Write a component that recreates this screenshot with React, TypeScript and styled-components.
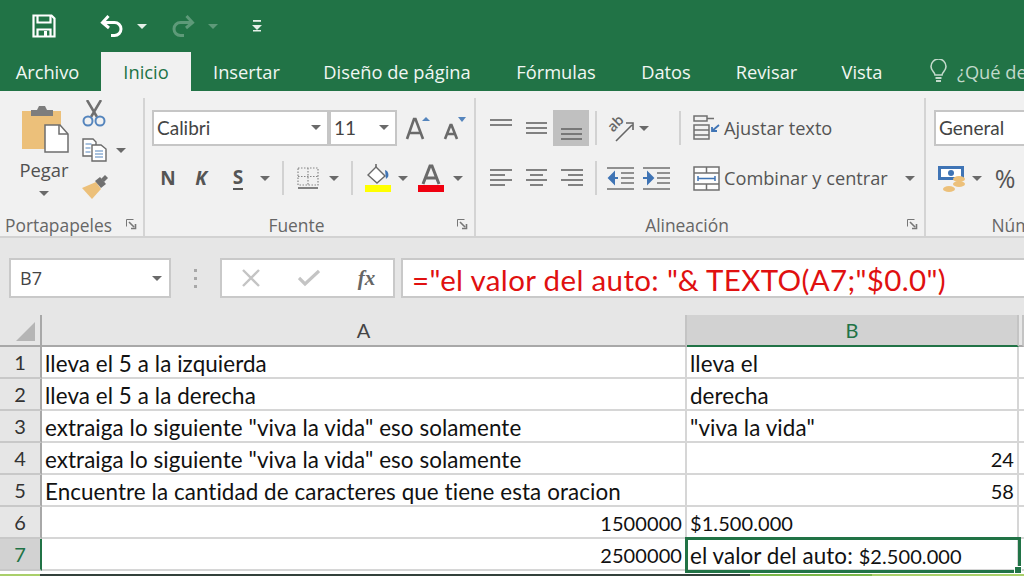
import React from "react";
import styled, { createGlobalStyle } from "styled-components";

const Global = createGlobalStyle`
  html, body { margin: 0; padding: 0; background: #fff; }
  body { width: 1024px; height: 576px; overflow: hidden; font-family: "Open Sans", "Liberation Sans", sans-serif; }
`;

const Page = styled.div`
  width: 1024px;
  height: 576px;
  display: flex;
  flex-direction: column;
  overflow: hidden;
`;

const TitleBar = styled.div`
  height: 52px;
  background: #217346;
  display: flex;
  align-items: center;
  flex: none;
`;

const QatSlot = styled.div<{ $w: number }>`
  width: ${(p) => p.$w}px;
  display: flex;
  justify-content: center;
  align-items: center;
  flex: none;
`;

const TabBar = styled.div`
  height: 39px;
  background: #217346;
  display: flex;
  align-items: stretch;
  flex: none;
`;

const Tab = styled.div<{ $w: number; $active?: boolean }>`
  width: ${(p) => p.$w}px;
  flex: none;
  display: flex;
  align-items: center;
  justify-content: center;
  font-size: 18.3px;
  box-sizing: border-box;
  color: ${(p) => (p.$active ? "#217346" : "#f1f7f3")};
  background: ${(p) => (p.$active ? "#f1f1f1" : "transparent")};
`;

const Hint = styled.div`
  margin-left: 27px;
  display: flex;
  align-items: center;
  gap: 10px;
  color: #c2d9cb;
  font-size: 18.3px;
  white-space: nowrap;
`;

const Ribbon = styled.div`
  height: 147px;
  flex: none;
  box-sizing: border-box;
  background: #f1f1f1;
  border-bottom: 2px solid #d2d2d2;
  display: flex;
  align-items: stretch;
  overflow: hidden;
`;

const Group = styled.div<{ $w: number; $last?: boolean }>`
  width: ${(p) => p.$w}px;
  flex: none;
  box-sizing: border-box;
  margin-top: 7px;
  display: flex;
  flex-direction: column;
  border-right: ${(p) => (p.$last ? "none" : "2px solid #d4d4d4")};
`;

const GroupBody = styled.div<{ $pad: number }>`
  flex: 1;
  display: flex;
  padding: 12px 0 0 ${(p) => p.$pad}px;
  min-height: 0;
`;

const GroupLabel = styled.div`
  height: 22px;
  flex: none;
  position: relative;
  display: flex;
  align-items: flex-start;
  justify-content: center;
  box-sizing: border-box;
  padding-right: 26px;
  font-size: 17.4px;
  line-height: 22px;
  color: #666;
  white-space: nowrap;
`;

const Launcher = styled.div`
  position: absolute;
  right: 6px;
  top: 5px;
  line-height: 0;
`;

const PasteColumn = styled.div`
  width: 66px;
  margin-top: -5px;
  display: flex;
  flex-direction: column;
  align-items: center;
  color: #555;
  & > svg:first-child {
    margin-left: 4px;
  }
`;

const PasteLabel = styled.div`
  font-size: 18.4px;
  line-height: 24px;
  margin-top: 5px;
  margin-bottom: 9px;
  color: #505050;
`;

const SmallColumn = styled.div`
  display: flex;
  flex-direction: column;
  gap: 5px;
  margin: -13px 0 0 5px;
`;

const SmallRow = styled.div`
  height: 32px;
  display: flex;
  align-items: center;
  gap: 9px;
`;

const Stack = styled.div`
  display: flex;
  flex-direction: column;
  gap: 14px;
`;

const ToolRow = styled.div`
  height: 36px;
  display: flex;
  align-items: center;
`;

const Slot = styled.div<{ $w: number; $selected?: boolean }>`
  width: ${(p) => p.$w}px;
  height: 36px;
  flex: none;
  display: flex;
  align-items: center;
  justify-content: center;
  background: ${(p) => (p.$selected ? "#c0c0c0" : "transparent")};
`;

const Letter = styled.span<{ $italic?: boolean; $under?: boolean }>`
  font-family: "Open Sans", sans-serif;
  font-weight: 700;
  font-size: 19px;
  color: #555;
  font-style: ${(p) => (p.$italic ? "italic" : "normal")};
  border-bottom: ${(p) => (p.$under ? "2px solid #555" : "none")};
  line-height: 21px;
`;

const Percent = styled.span`
  font-size: 25px;
  color: #555;
`;

const Divider = styled.div`
  width: 2px;
  height: 34px;
  background: #d2d2d2;
`;

const Select = styled.div<{ $w: number }>`
  width: ${(p) => p.$w}px;
  height: 36px;
  flex: none;
  box-sizing: border-box;
  background: #fff;
  border: 2px solid #c6c6c6;
  display: flex;
  align-items: center;
  justify-content: space-between;
  padding: 0 6px 2px 3px;
  font-family: Lato, Carlito, sans-serif;
  font-size: 19px;
  color: #444;
`;

const Caret = styled.span<{ $color?: string }>`
  display: inline-block;
  flex: none;
  width: 0;
  height: 0;
  border-left: 5px solid transparent;
  border-right: 5px solid transparent;
  border-top: 5px solid ${(p) => p.$color || "#6a6a6a"};
`;

const WrapColumn = styled.div`
  margin-left: 7px;
  display: flex;
  flex-direction: column;
  gap: 14px;
`;

const WrapRow = styled.div`
  height: 36px;
  display: flex;
  align-items: center;
  gap: 4px;
  font-size: 18.2px;
  color: #555;
  white-space: nowrap;
`;

const Gap = styled.div`
  height: 20px;
  flex: none;
  background: #e6e6e6;
`;

const FormulaBar = styled.div`
  height: 57px;
  flex: none;
  background: #e6e6e6;
  display: flex;
  align-items: flex-start;
  padding-left: 9px;
`;

const NameBox = styled.div`
  width: 162px;
  height: 40px;
  box-sizing: border-box;
  background: #fff;
  border: 2px solid #c9c9c9;
  display: flex;
  align-items: center;
  justify-content: space-between;
  padding: 0 7px 0 9px;
  font-size: 18px;
  color: #444;
  flex: none;
`;

const Dots = styled.div`
  width: 49px;
  height: 40px;
  flex: none;
  display: flex;
  flex-direction: column;
  align-items: center;
  justify-content: center;
  gap: 5px;
`;

const Dot = styled.div`
  width: 3px;
  height: 3px;
  background: #a8a8a8;
`;

const FormulaButtons = styled.div`
  width: 175px;
  height: 40px;
  flex: none;
  box-sizing: border-box;
  background: #fff;
  border: 2px solid #c9c9c9;
  display: flex;
  align-items: center;
`;

const FxSlot = styled.div<{ $w: number }>`
  width: ${(p) => p.$w}px;
  display: flex;
  justify-content: center;
  flex: none;
`;

const Fx = styled.span`
  font-family: "Liberation Serif", serif;
  font-style: italic;
  font-size: 21px;
  font-weight: 700;
  color: #666;
`;

const FormulaInput = styled.div`
  flex: 1;
  height: 40px;
  margin-left: 6px;
  box-sizing: border-box;
  background: #fff;
  border: 2px solid #c9c9c9;
  border-right: none;
  display: flex;
  align-items: center;
  padding: 2px 0 0 9px;
  font-family: Lato, Carlito, sans-serif;
  font-size: 29.500px;
  letter-spacing: 0.35px;
  color: #e01010;
  white-space: nowrap;
`;

const Sheet = styled.div`
  flex: none;
  display: grid;
  grid-template-columns: 42px 645px 332px 5px;
  grid-template-rows: 32px repeat(7, 32px);
`;

const Corner = styled.div`
  background: #e6e6e6;
  border-right: 2px solid #a8a8a8;
  border-bottom: 2px solid #a8a8a8;
  box-sizing: border-box;
  display: flex;
  align-items: flex-end;
  justify-content: flex-end;
  padding: 0 4px 4px 0;
`;

const ColHead = styled.div<{ $selected?: boolean }>`
  background: ${(p) => (p.$selected ? "#d2d2d2" : "#e6e6e6")};
  color: ${(p) => (p.$selected ? "#217346" : "#444")};
  border-right: 2px solid #c4c4c4;
  border-bottom: 2px solid ${(p) => (p.$selected ? "#217346" : "#a8a8a8")};
  box-sizing: border-box;
  display: flex;
  align-items: center;
  justify-content: center;
  font-family: Lato, Carlito, sans-serif;
  font-size: 20px;
`;

const RowHead = styled.div<{ $selected?: boolean }>`
  background: ${(p) => (p.$selected ? "#d2d2d2" : "#e6e6e6")};
  color: ${(p) => (p.$selected ? "#217346" : "#333")};
  border-right: 2px solid ${(p) => (p.$selected ? "#217346" : "#a8a8a8")};
  border-bottom: 2px solid #c8c8c8;
  box-sizing: border-box;
  display: flex;
  align-items: center;
  justify-content: center;
  font-family: Lato, Carlito, sans-serif;
  font-size: 20px;
`;

const Cell = styled.div<{ $right?: boolean; $selected?: boolean }>`
  position: relative;
  background: #fff;
  border-right: 2px solid #d6d6d6;
  border-bottom: 2px solid #d6d6d6;
  box-sizing: border-box;
  display: flex;
  align-items: center;
  justify-content: ${(p) => (p.$right ? "flex-end" : "flex-start")};
  padding: 2px 3px 0 3px;
  font-family: Lato, Carlito, sans-serif;
  font-size: 22.400px;
  letter-spacing: 0.08px;
  color: #111;
  white-space: pre;
  ${(p) =>
    p.$selected &&
    `
    outline: 3px solid #217346;
    outline-offset: -1px;
    z-index: 2;
    &::after {
      content: "";
      position: absolute;
      right: -5px;
      bottom: -5px;
      width: 8px;
      height: 8px;
      background: #217346;
      border: 1px solid #fff;
      box-sizing: border-box;
    }
  `}
`;

const Num = styled.span`
  font-size: 20px;
`;

const BottomEdge = styled.div`
  flex: 1;
  margin-top: 3px;
  display: flex;
  background: #33413b;
`;

const EdgePiece = styled.div<{ $w: number; $color: string }>`
  width: ${(p) => p.$w}px;
  flex: none;
  background: ${(p) => p.$color};
`;

const G = "#6a6a6a";

const SaveIcon = () => (
  <svg width="24" height="24" viewBox="0 0 24 24" fill="none" stroke="#fff" strokeWidth="2.2">
    <path d="M1.5 1.5h18l3 3v18h-21z" />
    <path d="M5.5 1.5v7h13v-7" />
    <path d="M5.5 22.500v-7h13v7" />
    <rect x="12" y="17" width="3" height="5" fill="#fff" stroke="none" />
  </svg>
);

const UndoIcon = ({ color, flip }: { color: string; flip?: boolean }) => (
  <svg
    width="24"
    height="24"
    viewBox="0 0 24 24"
    fill="none"
    stroke={color}
    strokeWidth="3"
    transform={flip ? "scale(-1 1)" : undefined}
  >
    <path d="M8.500 2 2.500 8.500 9 14" />
    <path d="M3 8.500h11.500a6 6 0 0 1 0 13H11" />
  </svg>
);

const QatMore = () => (
  <svg width="10" height="12" viewBox="0 0 10 12" fill="#e4efe8">
    <rect x="1" y="0" width="8" height="1.800" />
    <path d="M0 5h10l-5 5z" />
    <rect x="1" y="10" width="8" height="1.500" />
  </svg>
);

const BulbIcon = () => (
  <svg width="17" height="25" viewBox="0 0 17 25" fill="none" stroke="#c2d9cb" strokeWidth="1.600">
    <path d="M5 16c0-3-4-4-4-8.500a7.500 7.500 0 0 1 15 0C16 12 12 13 12 16z" />
    <path d="M5.500 19h6M6 22h5" strokeWidth="2" />
  </svg>
);

const PasteIcon = () => (
  <svg width="48" height="48" viewBox="0 0 48 48">
    <path d="M0 6h39v38H0z" fill="#ecc07a" />
    <path d="M9 5h6l2-4h6l2 4h6v6H9z" fill="#7d7d7d" />
    <path d="M23 20h15l8 9v18H23z" fill="#fff" stroke="#6e6e6e" strokeWidth="1.500" />
    <path d="M37 20v9h9" fill="none" stroke="#6e6e6e" strokeWidth="1.500" />
  </svg>
);

const ScissorsIcon = () => (
  <svg width="24" height="27" viewBox="0 0 24 27" fill="none">
    <path d="M5 0 15 17M19 0 9 17" stroke="#6f6f6f" strokeWidth="2.500" />
    <circle cx="6" cy="21" r="4.500" stroke="#5585bd" strokeWidth="2" />
    <circle cx="18" cy="21" r="4.500" stroke="#5585bd" strokeWidth="2" />
  </svg>
);

const CopyIcon = () => (
  <svg width="25" height="24" viewBox="0 0 25 24" fill="#fff" stroke="#6a6a6a" strokeWidth="1.400">
    <path d="M1 1h10l3 3v14H1z" />
    <path d="M10 7h9l5 4v12H10z" />
    <path d="M3.500 6h6M3.500 10h5M3.500 14h5" strokeWidth="1.200" stroke="#5585bd" />
    <path d="M13 13h8M13 16h8M13 19h8" strokeWidth="1.200" stroke="#5585bd" />
  </svg>
);

const BrushIcon = () => (
  <svg width="26" height="24" viewBox="0 0 26 24">
    <path d="M0 13 14 7l5 7-9 10z" fill="#ecc07a" />
    <path d="M13 6 18 2l6 7-5 4z" fill="#707070" />
    <path d="M19 4 23 0l3 3-4 4z" fill="#707070" />
  </svg>
);

const GrowIcon = ({ big }: { big?: boolean }) => (
  <svg width="26" height="26" viewBox="0 0 26 26" fill="none">
    <path
      d={big ? "M3 24 10 4h1.500L19 24M6 18h10" : "M3 24 8.500 10h1L15 24M5 19h8"}
      stroke={G}
      strokeWidth="2.600"
    />
    {big ? <path d="M18 6l4-4 4 4z" fill="#5585bd" /> : <path d="M16 2h8l-4 5z" fill="#5585bd" />}
  </svg>
);

const BorderIcon = () => (
  <svg width="22" height="22" viewBox="0 0 22 22" fill="none">
    <path d="M1 1h20v17H1zM11 1v17M1 9.500h20" stroke="#888" strokeWidth="1.200" strokeDasharray="1.500 1.500" />
    <path d="M1 21h20" stroke="#666" strokeWidth="1.600" />
  </svg>
);

const FillIcon = () => (
  <svg width="28" height="28" viewBox="0 0 28 28" fill="none">
    <path d="M4 11 12 3l9 9-8 7z" fill="#fff" stroke="#6a6a6a" strokeWidth="1.400" />
    <path d="M12 3V0" stroke="#6a6a6a" strokeWidth="1.600" />
    <path d="M21 6c3 1 4 4 3 7l-2 2z" fill="#3f74b5" />
    <rect x="1" y="21" width="26" height="7" fill="#ffff00" />
  </svg>
);

const ColorIcon = () => (
  <svg width="26" height="28" viewBox="0 0 26 28" fill="none">
    <path d="M5 20 12 2h2l7 18M8 14h10" stroke="#6a6a6a" strokeWidth="3" />
    <rect x="0" y="21" width="26" height="7" fill="#f00010" />
  </svg>
);

const AlignLines = ({ rows, y = 0 }: { rows: [number, number][]; y?: number }) => (
  <svg width="24" height="24" viewBox="0 0 24 24" stroke="#666" strokeWidth="1.600">
    {rows.map(([a, b], i) => (
      <line key={i} x1={a} x2={b} y1={y + i * 5} y2={y + i * 5} />
    ))}
  </svg>
);

const OrientIcon = () => (
  <svg width="28" height="28" viewBox="0 0 28 28" fill="none" stroke="#666" overflow="visible">
    <text
      x="2"
      y="15"
      fontFamily="Open Sans, sans-serif"
      fontSize="14"
      fontWeight="600"
      fill="#666"
      stroke="none"
      transform="rotate(-45 9 11)"
    >
      ab
    </text>
    <path d="M10 27 26 11M20 9h7v7" strokeWidth="1.600" />
  </svg>
);

const IndentIcon = ({ flip }: { flip?: boolean }) => (
  <svg width="27" height="23" viewBox="0 0 27 23" fill="none">
    <path d="M0 1h27M0 22h27M14 6h13M14 11h13M14 16h13" stroke="#707070" strokeWidth="1.600" />
    <path d={flip ? "M0 11h7M5 6l5 5-5 5z" : "M3 11h8M7 6l-5 5 5 5z"} stroke="#3f74b5" strokeWidth="2" fill="#3f74b5" />
  </svg>
);

const WrapIcon = () => (
  <svg width="27" height="26" viewBox="0 0 27 26" fill="none" stroke="#707070" strokeWidth="1.500">
    <path d="M1 1h13v5H1zM14 3.500h7" />
    <path d="M1 10h15v14H1zM1 15h15M1 20h15" />
    <path d="M26 10 19 16M24 16h-5v-4" stroke="#3f74b5" strokeWidth="1.800" />
  </svg>
);

const MergeIcon = () => (
  <svg width="27" height="25" viewBox="0 0 27 25" fill="#fdfdfd" stroke="#707070" strokeWidth="1.500">
    <path d="M1 1h25v23H1zM1 7h25M1 18h25M13.500 1v6M13.500 18v6" />
    <path d="M5 12.500h17M5 10v5M22 10v5" stroke="#3f74b5" />
  </svg>
);

const MoneyIcon = () => (
  <svg width="28" height="27" viewBox="0 0 28 27">
    <rect x="0" y="1" width="26" height="14" fill="#3f74b5" />
    <rect x="3" y="4" width="20" height="8" fill="#fff" />
    <circle cx="13" cy="8" r="3" fill="#3f74b5" />
    <ellipse cx="21" cy="14" rx="6" ry="3" fill="#ecc07a" />
    <ellipse cx="21" cy="19" rx="6" ry="3" fill="#ecc07a" />
    <ellipse cx="11" cy="24" rx="6" ry="3" fill="#ecc07a" />
  </svg>
);

const LauncherIcon = () => (
  <svg width="11" height="11" viewBox="0 0 11 11" fill="none" stroke="#777">
    <path d="M.5 7.500V.5h7" />
    <path d="M3 3l5 5M9.500 5v4.500H5" strokeWidth="1.600" />
  </svg>
);

const CrossIcon = () => (
  <svg width="18" height="18" viewBox="0 0 18 18" stroke="#c4c4c4" strokeWidth="2.400">
    <path d="M1 1l16 16M17 1 1 17" />
  </svg>
);

const CheckIcon = () => (
  <svg width="22" height="18" viewBox="0 0 22 18" fill="none" stroke="#c4c4c4" strokeWidth="3.200">
    <path d="M1 9l6 6L21 2" />
  </svg>
);

const CornerMark = () => (
  <svg width="20" height="19" viewBox="0 0 20 19">
    <path d="M19 0v19H0z" fill="#b5b5b5" />
  </svg>
);

const rows: { a: React.ReactNode; b: React.ReactNode; aRight?: boolean; bRight?: boolean }[] = [
  { a: "lleva el 5 a la izquierda", b: "lleva el" },
  { a: "lleva el 5 a la derecha", b: "derecha" },
  { a: 'extraiga lo siguiente "viva la vida" eso solamente', b: '"viva la vida"' },
  { a: 'extraiga lo siguiente "viva la vida" eso solamente', b: <Num>24</Num>, bRight: true },
  { a: "Encuentre la cantidad de caracteres que tiene esta oracion", b: <Num>58</Num>, bRight: true },
  { a: <Num>1500000</Num>, b: <Num>$1.500.000</Num>, aRight: true },
  {
    a: <Num>2500000</Num>,
    b: (
      <span>
        el valor del auto: <Num>$2.500.000</Num>
      </span>
    ),
    aRight: true,
  },
];

const tabs: [string, number][] = [
  ["Archivo", 95],
  ["", 6],
  ["Inicio", 90],
  ["Insertar", 111],
  ["Diseño de página", 190],
  ["Fórmulas", 128],
  ["Datos", 92],
  ["Revisar", 109],
  ["Vista", 82],
];

const App: React.FC = () => {
  return (
    <Page>
      <Global />
      <TitleBar>
        <QatSlot $w={87}>
          <SaveIcon />
        </QatSlot>
        <QatSlot $w={50}>
          <UndoIcon color="#fff" />
        </QatSlot>
        <QatSlot $w={10}>
          <Caret $color="#e4efe8" />
        </QatSlot>
        <QatSlot $w={11} />
        <QatSlot $w={50}>
          <UndoIcon color="#5e9a79" flip />
        </QatSlot>
        <QatSlot $w={10}>
          <Caret $color="#5e9a79" />
        </QatSlot>
        <QatSlot $w={78}>
          <QatMore />
        </QatSlot>
      </TitleBar>
      <TabBar>
        {tabs.map(([name, w], i) => (
          <Tab key={i} $w={w} $active={name === "Inicio"}>
            {name}
          </Tab>
        ))}
        <Hint>
          <BulbIcon />
          ¿Qué desea hacer?
        </Hint>
      </TabBar>
      <Ribbon>
        <Group $w={145}>
          <GroupBody $pad={11}>
            <PasteColumn>
              <PasteIcon />
              <PasteLabel>Pegar</PasteLabel>
              <Caret />
            </PasteColumn>
            <SmallColumn>
              <SmallRow>
                <ScissorsIcon />
              </SmallRow>
              <SmallRow>
                <CopyIcon />
                <Caret />
              </SmallRow>
              <SmallRow>
                <BrushIcon />
              </SmallRow>
            </SmallColumn>
          </GroupBody>
          <GroupLabel>
            Portapapeles
            <Launcher>
              <LauncherIcon />
            </Launcher>
          </GroupLabel>
        </Group>
        <Group $w={331}>
          <GroupBody $pad={7}>
            <Stack>
              <ToolRow>
                <Select $w={177}>
                  Calibri
                  <Caret />
                </Select>
                <Select $w={68}>
                  11
                  <Caret />
                </Select>
                <Slot $w={40}>
                  <GrowIcon big />
                </Slot>
                <Slot $w={36}>
                  <GrowIcon />
                </Slot>
              </ToolRow>
              <ToolRow>
                <Slot $w={32}>
                  <Letter>N</Letter>
                </Slot>
                <Slot $w={34}>
                  <Letter $italic>K</Letter>
                </Slot>
                <Slot $w={40}>
                  <Letter $under>S</Letter>
                </Slot>
                <Slot $w={14}>
                  <Caret />
                </Slot>
                <Slot $w={22}>
                  <Divider />
                </Slot>
                <Slot $w={28}>
                  <BorderIcon />
                </Slot>
                <Slot $w={24}>
                  <Caret />
                </Slot>
                <Slot $w={12}>
                  <Divider />
                </Slot>
                <Slot $w={40}>
                  <FillIcon />
                </Slot>
                <Slot $w={10}>
                  <Caret />
                </Slot>
                <Slot $w={46}>
                  <ColorIcon />
                </Slot>
                <Slot $w={8}>
                  <Caret />
                </Slot>
              </ToolRow>
            </Stack>
          </GroupBody>
          <GroupLabel>
            Fuente
            <Launcher>
              <LauncherIcon />
            </Launcher>
          </GroupLabel>
        </Group>
        <Group $w={450}>
          <GroupBody $pad={8}>
            <Stack>
              <ToolRow>
                <Slot $w={34}>
                  <AlignLines rows={[[1, 23], [1, 23]]} y={4} />
                </Slot>
                <Slot $w={35}>
                  <AlignLines rows={[[2, 23], [2, 23], [2, 23]]} y={7} />
                </Slot>
                <Slot $w={36} $selected>
                  <AlignLines rows={[[2, 23], [2, 23], [2, 23]]} y={13} />
                </Slot>
                <Slot $w={14}>
                  <Divider />
                </Slot>
                <Slot $w={33}>
                  <OrientIcon />
                </Slot>
                <Slot $w={16}>
                  <Caret />
                </Slot>
              </ToolRow>
              <ToolRow>
                <Slot $w={34}>
                  <AlignLines rows={[[1, 23], [1, 16], [1, 23], [1, 16]]} y={4} />
                </Slot>
                <Slot $w={35}>
                  <AlignLines rows={[[2, 23], [6, 19], [2, 23], [6, 19]]} y={4} />
                </Slot>
                <Slot $w={36}>
                  <AlignLines rows={[[2, 24], [9, 24], [2, 24], [9, 24]]} y={4} />
                </Slot>
                <Slot $w={14}>
                  <Divider />
                </Slot>
                <Slot $w={35}>
                  <IndentIcon />
                </Slot>
                <Slot $w={36}>
                  <IndentIcon flip />
                </Slot>
              </ToolRow>
            </Stack>
            <Slot $w={12}>
              <Divider />
            </Slot>
            <WrapColumn>
              <WrapRow>
                <WrapIcon />
                Ajustar texto
              </WrapRow>
              <WrapRow>
                <MergeIcon />
                Combinar y centrar
                <Slot $w={36}>
                  <Caret />
                </Slot>
              </WrapRow>
            </WrapColumn>
          </GroupBody>
          <GroupLabel>
            Alineación
            <Launcher>
              <LauncherIcon />
            </Launcher>
          </GroupLabel>
        </Group>
        <Group $w={224} $last>
          <GroupBody $pad={8}>
            <Stack>
              <ToolRow>
                <Select $w={130}>General</Select>
              </ToolRow>
              <ToolRow>
                <Slot $w={36}>
                  <MoneyIcon />
                </Slot>
                <Slot $w={14}>
                  <Caret />
                </Slot>
                <Slot $w={42}>
                  <Percent>%</Percent>
                </Slot>
              </ToolRow>
            </Stack>
          </GroupBody>
          <GroupLabel>Número</GroupLabel>
        </Group>
      </Ribbon>
      <Gap />
      <FormulaBar>
        <NameBox>
          B7
          <Caret />
        </NameBox>
        <Dots>
          <Dot />
          <Dot />
          <Dot />
        </Dots>
        <FormulaButtons>
          <FxSlot $w={58}>
            <CrossIcon />
          </FxSlot>
          <FxSlot $w={58}>
            <CheckIcon />
          </FxSlot>
          <FxSlot $w={57}>
            <Fx>fx</Fx>
          </FxSlot>
        </FormulaButtons>
        <FormulaInput>="el valor del auto: "&amp; TEXTO(A7;"$0.0")</FormulaInput>
      </FormulaBar>
      <Sheet>
        <Corner>
          <CornerMark />
        </Corner>
        <ColHead>A</ColHead>
        <ColHead $selected>B</ColHead>
        <ColHead />
        {rows.map((r, i) => (
          <React.Fragment key={i}>
            <RowHead $selected={i === 6}>{i + 1}</RowHead>
            <Cell $right={r.aRight}>{r.a}</Cell>
            <Cell $right={r.bRight} $selected={i === 6}>
              {r.b}
            </Cell>
            <Cell />
          </React.Fragment>
        ))}
      </Sheet>
      <BottomEdge>
        <EdgePiece $w={40} $color="#a9cf6a" />
        <EdgePiece $w={710} $color="#33413b" />
        <EdgePiece $w={122} $color="#7ab648" />
        <EdgePiece $w={152} $color="#a9cf6a" />
      </BottomEdge>
    </Page>
  );
};

export default App;
